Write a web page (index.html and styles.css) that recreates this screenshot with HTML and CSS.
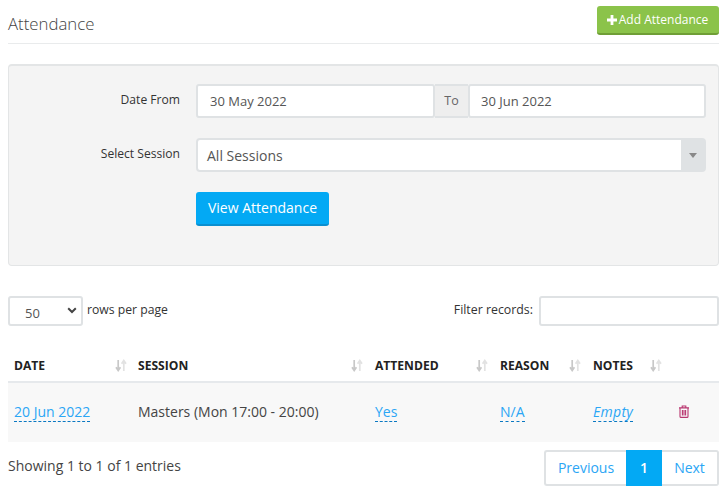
FILE: index.html
```html
<!DOCTYPE html>
<html lang="en">
<head>
<meta charset="utf-8">
<title>Attendance</title>
<link rel="stylesheet" href="styles.css">
</head>
<body>
<div class="page">
  <header class="head">
    <h1 class="title">Attendance</h1>
    <button class="add-btn" type="button"><svg class="plus" viewBox="0 0 10 10" width="10" height="10"><path d="M3.6 0h2.8v3.6H10v2.8H6.4V10H3.6V6.4H0V3.6h3.6z" fill="#fff"/></svg>Add Attendance</button>
  </header>
  <section class="panel">
    <div class="form-row date-row">
      <label class="form-label">Date From</label>
      <div class="group">
        <div class="field field-from">30 May 2022</div>
        <div class="addon">To</div>
        <div class="field field-to">30 Jun 2022</div>
      </div>
    </div>
    <div class="form-row session-row">
      <label class="form-label">Select Session</label>
      <div class="combo">
        <div class="combo-value">All Sessions</div>
        <div class="combo-arrow"><span class="caret"></span></div>
      </div>
    </div>
    <div class="form-row action-row">
      <span class="form-label"></span>
      <button class="view-btn" type="button">View Attendance</button>
    </div>
  </section>
  <div class="tools">
    <div class="tool-left">
      <div class="rows-select"><span class="rows-value">50</span><svg class="chev" viewBox="0 0 10 7" width="10" height="7"><path d="M1.2 1.3 5 5l3.8-3.7" fill="none" stroke="#444" stroke-width="2"/></svg></div>
      <span class="tool-text">rows per page</span>
    </div>
    <div class="tool-right">
      <span class="tool-text filter-label">Filter records:</span>
      <div class="filter-input"></div>
    </div>
  </div>
  <table class="grid">
    <colgroup>
      <col class="c1"><col class="c2"><col class="c3"><col class="c4"><col class="c5"><col class="c6">
    </colgroup>
    <thead>
      <tr>
        <th><div class="th-in">DATE<svg class="sort" viewBox="0 0 12 13" width="12" height="13"><path d="M3.2 1v10M1 8.2l2.2 3.3 2.2-3.3" fill="none" stroke="#c8c8c8" stroke-width="1.7"/><path d="M8.8 12V2M6.6 4.8l2.2-3.3L11 4.8" fill="none" stroke="#e2e2e2" stroke-width="1.7"/></svg></div></th>
        <th><div class="th-in">SESSION<svg class="sort" viewBox="0 0 12 13" width="12" height="13"><path d="M3.2 1v10M1 8.2l2.2 3.3 2.2-3.3" fill="none" stroke="#c8c8c8" stroke-width="1.7"/><path d="M8.8 12V2M6.6 4.8l2.2-3.3L11 4.8" fill="none" stroke="#e2e2e2" stroke-width="1.7"/></svg></div></th>
        <th><div class="th-in">ATTENDED<svg class="sort" viewBox="0 0 12 13" width="12" height="13"><path d="M3.2 1v10M1 8.2l2.2 3.3 2.2-3.3" fill="none" stroke="#c8c8c8" stroke-width="1.7"/><path d="M8.8 12V2M6.6 4.8l2.2-3.3L11 4.8" fill="none" stroke="#e2e2e2" stroke-width="1.7"/></svg></div></th>
        <th><div class="th-in">REASON<svg class="sort" viewBox="0 0 12 13" width="12" height="13"><path d="M3.2 1v10M1 8.2l2.2 3.3 2.2-3.3" fill="none" stroke="#c8c8c8" stroke-width="1.7"/><path d="M8.8 12V2M6.6 4.8l2.2-3.3L11 4.8" fill="none" stroke="#e2e2e2" stroke-width="1.7"/></svg></div></th>
        <th><div class="th-in">NOTES<svg class="sort" viewBox="0 0 12 13" width="12" height="13"><path d="M3.2 1v10M1 8.2l2.2 3.3 2.2-3.3" fill="none" stroke="#c8c8c8" stroke-width="1.7"/><path d="M8.8 12V2M6.6 4.8l2.2-3.3L11 4.8" fill="none" stroke="#e2e2e2" stroke-width="1.7"/></svg></div></th>
        <th></th>
      </tr>
    </thead>
    <tbody>
      <tr>
        <td><a class="edit">20 Jun 2022</a></td>
        <td>Masters (Mon 17:00 - 20:00)</td>
        <td><a class="edit">Yes</a></td>
        <td><a class="edit">N/A</a></td>
        <td><a class="edit empty">Empty</a></td>
        <td><svg class="trash" viewBox="0 0 12 13" width="12" height="13"><path d="M1 2.9h10M4.2 2.7V1h3.6v1.7M2 3v8.4c0 .6.4 1 1 1h6c.6 0 1-.4 1-1V3M4.4 5v5.6M6 5v5.6M7.6 5v5.6" fill="none" stroke="#b8356f" stroke-width="1.1"/></svg></td>
      </tr>
    </tbody>
  </table>
  <footer class="foot">
    <span class="info">Showing 1 to 1 of 1 entries</span>
    <nav class="pager">
      <a class="pg pg-prev">Previous</a>
      <a class="pg pg-cur">1</a>
      <a class="pg pg-next">Next</a>
    </nav>
  </footer>
</div>
</body>
</html>
```
FILE: styles.css
```css
* { box-sizing: border-box; }
html, body { margin: 0; padding: 0; background: #fff; }
body { font-family: "Open Sans", sans-serif; font-size: 13px; color: #333; }
.page { width: 711px; margin-left: 8px; padding-top: 6px; }
.head { height: 38px; border-bottom: 1px solid #e9ebec; display: flex; justify-content: space-between; align-items: flex-start; }
.title { margin: 8px 0 0; font-size: 16.8px; font-weight: 300; line-height: 20px; color: #444; }
.add-btn { width: 122px; height: 29px; padding: 0 1px 0 0; border: 0; border-bottom: 2px solid #6f9e36; border-radius: 3px; background: #8bc34a; color: #fff; font: 12px "Open Sans", sans-serif; display: flex; align-items: center; justify-content: center; gap: 2px; }
.panel { margin-top: 20px; height: 202px; background: #f4f4f4; border: 1px solid #e3e5e6; border-top-width: 2px; border-radius: 4px; padding: 18px 12px 0 0; }
.form-row { display: flex; }
.form-label { width: 171px; margin-right: 16px; flex: none; text-align: right; font-size: 12.1px; line-height: 32px; color: #333; }
.date-row { height: 34px; }
.session-row { margin-top: 20px; height: 34px; }
.action-row { margin-top: 20px; }
.group { flex: 1; display: flex; }
.field { height: 34px; background: #fff; border: 2px solid #dfe2e4; border-radius: 3px; line-height: 30px; font-size: 13px; color: #555; }
.field-from { width: 239px; padding-left: 12px; }
.field-to { width: 238px; padding-left: 11px; }
.addon { width: 33px; height: 34px; background: #eee; border-top: 2px solid #dfe2e4; border-bottom: 2px solid #dfe2e4; text-align: center; line-height: 30px; font-size: 12.5px; color: #666; }
.combo { flex: 1; height: 34px; display: flex; background: #fff; border: 2px solid #dfe2e4; border-radius: 4px; }
.combo-value { flex: 1; padding-left: 9px; font-size: 14px; line-height: 31px; color: #555; }
.combo-arrow { width: 23px; background: #dfe2e4; display: flex; align-items: center; justify-content: center; }
.caret { width: 0; height: 0; border-left: 4px solid transparent; border-right: 4px solid transparent; border-top: 5px solid #888; }
.view-btn { width: 133px; height: 34px; padding: 0 0 2px; border: 0; border-bottom: 2px solid #0a8fd0; border-radius: 3px; background: #03a9f4; color: #fff; font: 14px "Open Sans", sans-serif; }
.tools { margin-top: 30px; height: 30px; display: flex; justify-content: space-between; }
.tool-left, .tool-right { display: flex; align-items: flex-start; gap: 4px; }
.tool-right { gap: 6px; }
.tool-text { font-size: 12.2px; line-height: 28px; color: #333; }
.filter-label { font-size: 12.35px; }
.rows-select { width: 75px; height: 30px; border: 2px solid #dfe2e4; border-radius: 3px; padding: 0 4px 0 15px; font-size: 13px; color: #555; display: flex; align-items: center; justify-content: space-between; }
.rows-value { padding-top: 3px; }
.chev { margin-top: -1px; }
.filter-input { width: 180px; height: 30px; border: 2px solid #dfe2e4; border-radius: 3px; background: #fff; }
.grid { margin-top: 26px; width: 711px; table-layout: fixed; border-collapse: collapse; }
.c1 { width: 124px; } .c2 { width: 237px; } .c3 { width: 125px; } .c4 { width: 93px; } .c5 { width: 81px; } .c6 { width: 51px; }
.grid th { height: 30px; padding: 0 6px 2px; border-bottom: 2px solid #e6e9ec; text-align: left; font-size: 12.1px; font-weight: 700; color: #222; }
.grid th:first-child { padding-right: 5px; }
.th-in { display: flex; justify-content: space-between; align-items: center; }
.sort { flex: none; }
.grid td { height: 60px; padding: 0 6px 2px; background: #f8f8f8; font-size: 14px; color: #444; }
.edit { color: #2ba6f5; border-bottom: 1px dashed #0a78c2; }
.empty { font-style: italic; letter-spacing: .3px; }
.trash { display: block; margin-left: 4px; }
.foot { margin-top: 8px; display: flex; justify-content: space-between; align-items: flex-start; }
.info { font-size: 14px; line-height: 32px; color: #444; }
.pager { display: flex; height: 36px; }
.pg { display: block; font-size: 14px; line-height: 32px; color: #2ba6f5; border: 2px solid #dfe2e4; }
.pg-prev { width: 82px; text-align: center; border-right: 0; border-radius: 3px 0 0 3px; }
.pg-cur { width: 36px; text-align: center; background: #03a9f4; border-color: #03a9f4; color: #fff; font-weight: 600; }
.pg-next { width: 57px; text-align: center; border-left: 0; border-radius: 0 3px 3px 0; }
```
